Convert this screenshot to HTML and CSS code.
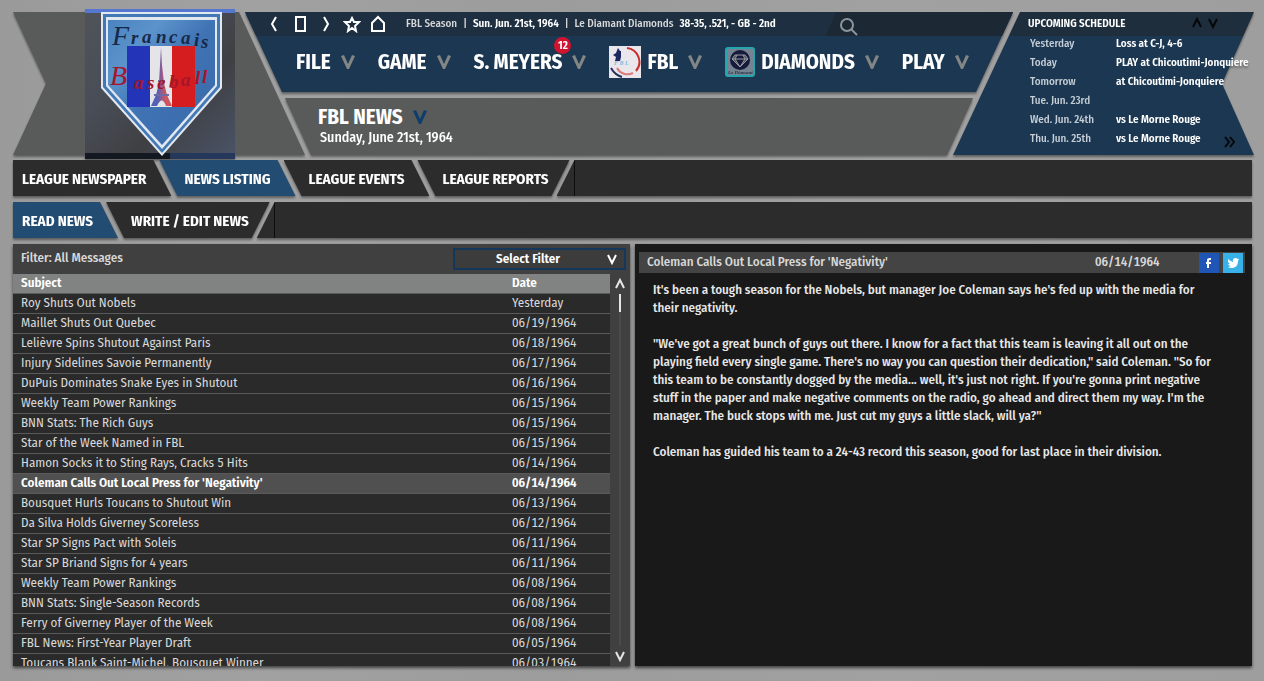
FILE: index.html
```html
<!DOCTYPE html>
<html lang="en">
<head>
  <meta charset="UTF-8" />
  <meta name="viewport" content="width=device-width, initial-scale=1" />
  <title>FBL News</title>
  <link rel="stylesheet" href="styles.css">
</head>
<body>
  <!-- shared icons -->
  <svg class="defs" width="0" height="0" aria-hidden="true">
    <symbol id="down" viewBox="0 0 14 16"><path d="M0 2l3-1 4 9 4-9 3 1-6 13H6z" /></symbol>
    <symbol id="caret" viewBox="0 0 10 12"><path d="M1 2l4 8 4-8" fill="none" stroke="currentColor" stroke-width="2" /></symbol>
  </svg>

  <header class="header">
    <div class="brand">
      <svg class="brand-logo" viewBox="0 0 150 150" role="img" aria-label="Francais Baseball">
        <defs>
          <linearGradient id="sky" x1="0" y1="0" x2="1" y2="1">
            <stop offset="0" stop-color="#505359" />
            <stop offset=".35" stop-color="#484d57" />
            <stop offset=".65" stop-color="#3f4043" />
            <stop offset="1" stop-color="#4a5468" />
          </linearGradient>
          <linearGradient id="plate" x1="0" y1="0" x2="1" y2="1">
            <stop offset="0" stop-color="#4a83c0" />
            <stop offset=".25" stop-color="#5c93cb" />
            <stop offset=".5" stop-color="#3f73b4" />
            <stop offset="1" stop-color="#3a69a8" />
          </linearGradient>
          <linearGradient id="tower" gradientUnits="userSpaceOnUse" x1="66" y1="0" x2="87" y2="0">
            <stop offset=".3" stop-color="#5261b8" />
            <stop offset=".7" stop-color="#d0555f" />
          </linearGradient>
        </defs>
        <rect width="150" height="150" fill="url(#sky)" />
        <rect width="150" height="4" fill="#5577cf" />
        <rect y="144" width="150" height="6" fill="#141921" />
        <rect x="85" y="144" width="65" height="6" fill="#26375c" />
        <path d="M16 3h121v76L77 147 16 79z" fill="#e1e8ef" />
        <path d="M18 5h117v73L77 144 18 78z" fill="#4378b6" />
        <path d="M21 8h111v69L77 140 21 77z" fill="#e1e8ef" />
        <path d="M23 11h107v65L77 136 23 76z" fill="url(#plate)" />
        <rect x="42" y="37" width="23" height="61" fill="#2334b8" />
        <rect x="65" y="37" width="22" height="61" fill="#e5e4e8" />
        <rect x="87" y="37" width="23" height="61" fill="#d51d20" />
        <path d="M76 38l1 18 2 18 3 12 5 11h-6q-4-11-9 0h-6l5-11 3-12 1-18z" fill="url(#tower)" />
        <path d="M69 86h15M73 72h7" stroke="#6f6aa6" stroke-width="2" />
        <text class="logo-text" y="36 35 34 34 34 35 37 39" x="27 46 57 71 84 96 109 116" fill="#17294a"><tspan class="logo-cap">F</tspan>rancais</text>
        <text class="logo-text" y="76 80 80 80 79 77 75 74" x="25 49 62 72 84 96 110 117" fill="#a5152c"><tspan class="logo-cap">B</tspan>aseball</text>
      </svg>
    </div>

    <div class="center">
      <div class="menu">
        <div class="toolbar">
          <div class="tools">
            <button type="button" aria-label="Back"><svg width="18" height="18" viewBox="0 0 18 18"><path d="M11 2L7 9l4 7" /></svg></button>
            <button type="button" aria-label="Page"><svg width="18" height="18" viewBox="0 0 18 18"><path d="M5 2h9v14H5z" /></svg></button>
            <button type="button" aria-label="Forward"><svg width="18" height="18" viewBox="0 0 18 18"><path d="M7 2l4 7-4 7" /></svg></button>
            <button type="button" aria-label="Favorites"><svg width="18" height="18" viewBox="0 0 18 18"><path d="M9 3l2 4h5l-4 4 1 5-4-3-4 3 1-5-4-4h5z" /></svg></button>
            <button type="button" aria-label="Home"><svg width="18" height="18" viewBox="0 0 18 18"><path d="M3 16V8l6-6 6 6v8z" /></svg></button>
          </div>
          <div class="status">
            <span>FBL Season</span><i>|</i><b>Sun. Jun. 21st, 1964</b><i>|</i><span>Le Diamant Diamonds</span><b>38-35, .521, - GB - 2nd</b>
          </div>
          <button type="button" class="search" aria-label="Search">
            <svg width="18" height="18" viewBox="0 0 18 18"><circle cx="7" cy="7" r="6" /><path d="M11 11l6 6" /></svg>
          </button>
        </div>
        <nav class="nav">
          <button type="button">FILE <svg class="down"><use href="#down" /></svg></button>
          <button type="button">GAME <svg class="down"><use href="#down" /></svg></button>
          <button type="button"><span class="manager">S. MEYERS<span class="badge">12</span></span> <svg class="down"><use href="#down" /></svg></button>
          <button type="button">
            <svg class="team" width="32" height="32" viewBox="0 0 32 32" aria-hidden="true">
              <rect width="32" height="32" fill="#e9e6ec" />
              <g fill="none" stroke-width="2">
                <path d="M18 2a14 14 0 0 1 9 23" stroke="#c8302e" />
                <path d="M8 22a12 12 0 0 0 16 5" stroke="#dc7c79" />
                <path d="M2 22q4 7 11 9" stroke="#20305f" />
              </g>
              <path d="M9 2l2 3h1v6l-1 4H6l1-4-3-2 3-2z" fill="#1c2862" />
              <text x="5" y="19" class="tiny" fill="#7fb9dd">F B L</text>
            </svg>
            FBL <svg class="down"><use href="#down" /></svg>
          </button>
          <button type="button">
            <svg class="team" width="30" height="30" viewBox="1 1 30 30" aria-hidden="true">
              <rect x="2" y="2" width="28" height="28" rx="2" fill="#758490" stroke="#27a5ae" stroke-width="2" />
              <circle cx="16" cy="14" r="10" fill="#171a3c" />
              <path d="M11 9h10l3 4-8 8-8-8zM8 13h16M13 9l-2 4 5 8 5-8-2-4" fill="#4b5058" stroke="#969ba1" />
              <text x="4" y="28" class="tiny small" fill="#26344d">Le Diamant</text>
            </svg>
            DIAMONDS <svg class="down"><use href="#down" /></svg>
          </button>
          <button type="button">PLAY <svg class="down"><use href="#down" /></svg></button>
        </nav>
      </div>
      <div class="heading">
        <h1>FBL NEWS <svg class="down"><use href="#down" /></svg></h1>
        <p>Sunday, June 21st, 1964</p>
      </div>
    </div>

    <section class="schedule">
      <div class="schedule-head">
        <h2>UPCOMING SCHEDULE</h2>
        <div class="schedule-arrows">
          <button type="button" aria-label="Earlier"><svg class="caret up"><use href="#caret" /></svg></button>
          <button type="button" aria-label="Later"><svg class="caret"><use href="#caret" /></svg></button>
        </div>
      </div>
      <table>
        <tr><td>Yesterday</td><td>Loss at C-J, 4-6</td></tr>
        <tr><td>Today</td><td>PLAY at Chicoutimi-Jonquiere</td></tr>
        <tr><td>Tomorrow</td><td>at Chicoutimi-Jonquiere</td></tr>
        <tr><td>Tue. Jun. 23rd</td><td></td></tr>
        <tr><td>Wed. Jun. 24th</td><td>vs Le Morne Rouge</td></tr>
        <tr><td>Thu. Jun. 25th</td><td>vs Le Morne Rouge</td></tr>
      </table>
      <button type="button" class="more" aria-label="Full schedule"><svg width="12" height="12" viewBox="0 0 12 12"><path d="M1 1l4 5-4 5M6 1l4 5-4 5" /></svg></button>
    </section>
  </header>

  <main class="page">
    <nav class="tabs">
      <a href="#newspaper">LEAGUE NEWSPAPER</a>
      <a href="#listing" class="active">NEWS LISTING</a>
      <a href="#events">LEAGUE EVENTS</a>
      <a href="#reports">LEAGUE REPORTS</a>
      <span class="filler"></span>
    </nav>
    <nav class="tabs">
      <a href="#read" class="active">READ NEWS</a>
      <a href="#write">WRITE / EDIT NEWS</a>
      <span class="filler"></span>
    </nav>

    <div class="panels">
      <section class="list">
        <div class="filter">
          <label for="filter">Filter: All Messages</label>
          <div class="select">
            <select id="filter"><option>Select Filter</option></select>
            <svg class="caret"><use href="#caret" /></svg>
          </div>
        </div>
        <div class="list-body">
          <div class="rows">
            <table>
              <thead><tr><th>Subject</th><th class="date">Date</th></tr></thead>
              <tbody>
                <tr><td>Roy Shuts Out Nobels</td><td>Yesterday</td></tr>
                <tr><td>Maillet Shuts Out Quebec</td><td>06/19/1964</td></tr>
                <tr><td>Lelièvre Spins Shutout Against Paris</td><td>06/18/1964</td></tr>
                <tr><td>Injury Sidelines Savoie Permanently</td><td>06/17/1964</td></tr>
                <tr><td>DuPuis Dominates Snake Eyes in Shutout</td><td>06/16/1964</td></tr>
                <tr><td>Weekly Team Power Rankings</td><td>06/15/1964</td></tr>
                <tr><td>BNN Stats: The Rich Guys</td><td>06/15/1964</td></tr>
                <tr><td>Star of the Week Named in FBL</td><td>06/15/1964</td></tr>
                <tr><td>Hamon Socks it to Sting Rays, Cracks 5 Hits</td><td>06/14/1964</td></tr>
                <tr class="selected"><td>Coleman Calls Out Local Press for 'Negativity'</td><td>06/14/1964</td></tr>
                <tr><td>Bousquet Hurls Toucans to Shutout Win</td><td>06/13/1964</td></tr>
                <tr><td>Da Silva Holds Giverney Scoreless</td><td>06/12/1964</td></tr>
                <tr><td>Star SP Signs Pact with Soleis</td><td>06/11/1964</td></tr>
                <tr><td>Star SP Briand Signs for 4 years</td><td>06/11/1964</td></tr>
                <tr><td>Weekly Team Power Rankings</td><td>06/08/1964</td></tr>
                <tr><td>BNN Stats: Single-Season Records</td><td>06/08/1964</td></tr>
                <tr><td>Ferry of Giverney Player of the Week</td><td>06/08/1964</td></tr>
                <tr><td>FBL News: First-Year Player Draft</td><td>06/05/1964</td></tr>
                <tr><td>Toucans Blank Saint-Michel, Bousquet Winner</td><td>06/03/1964</td></tr>
              </tbody>
            </table>
          </div>
          <div class="scrollbar">
            <button type="button" aria-label="Scroll up"><svg class="caret up"><use href="#caret" /></svg></button>
            <div class="track"><div class="thumb"></div></div>
            <button type="button" aria-label="Scroll down"><svg class="caret"><use href="#caret" /></svg></button>
          </div>
        </div>
      </section>

      <article class="story">
        <div class="story-head">
          <h2>Coleman Calls Out Local Press for 'Negativity'</h2>
          <time datetime="1964-06-14">06/14/1964</time>
          <a href="#facebook" class="share facebook" aria-label="Share on Facebook"><svg width="20" height="20" viewBox="0 0 20 20"><path d="M8 15v-4H7V9h1V7q0-2 3-2h1v2h-1q-1 0-1 1v1h2v2h-2v4z" /></svg></a>
          <a href="#twitter" class="share twitter" aria-label="Share on Twitter"><svg width="20" height="20" viewBox="0 0 20 20"><path d="M5 6q2 2 5 3-1-4 3-4l2 1 1 0-1 2c0 5-3 7-6 7q-3 0-4-1l3-1q-2 0-3-2h2q-2-1-2-3z" /></svg></a>
        </div>
        <div class="story-text">
          <p>It's been a tough season for the Nobels, but manager Joe Coleman says he's fed up with the media for their negativity.</p>
          <p>"We've got a great bunch of guys out there. I know for a fact that this team is leaving it all out on the playing field every single game. There's no way you can question their dedication," said Coleman. "So for this team to be constantly dogged by the media... well, it's just not right. If you're gonna print negative stuff in the paper and make negative comments on the radio, go ahead and direct them my way. I'm the manager. The buck stops with me. Just cut my guys a little slack, will ya?"</p>
          <p>Coleman has guided his team to a 24-43 record this season, good for last place in their division.</p>
        </div>
      </article>
    </div>
  </main>
</body>
</html>
```
FILE: styles.css
```css
* {
  box-sizing: border-box;
}
body {
  margin: 0;
  height: 100vh;
  display: flex;
  flex-direction: column;
  overflow: hidden;
  background: linear-gradient(90deg, #9a9a9a, #a1a1a1 20%, #9c9c9c 45%, #a1a1a1 70%, #9e9e9e);
  color: #d8d8d8;
  font-family: "Fira Sans Condensed", Lato, sans-serif;
  font-size: 13px;
}
h1, h2, p {
  margin: 0;
}
button {
  padding: 0;
  border: none;
  background: none;
  color: inherit;
  font: inherit;
  cursor: pointer;
}
a {
  color: inherit;
  text-decoration: none;
}
svg {
  display: block;
  flex: none;
}
table {
  border-collapse: collapse;
}
.defs {
  position: absolute;
}
.down {
  width: 14px;
  height: 16px;
  fill: #838685;
}
.caret {
  width: 10px;
  height: 12px;
}
.up {
  transform: rotate(180deg);
}

/* header */
.header {
  display: flex;
  height: 143px;
  margin: 12px 10px 5px 13px;
  filter: drop-shadow(0 2px 1px rgba(0, 0, 0, 0.4));
}
.brand {
  position: relative;
  flex: none;
  width: 292px;
}
.brand::before {
  content: "";
  display: block;
  height: 100%;
  background: #595b5a;
  clip-path: polygon(0 0, 226px 0, 100% 100%, 0 100%, 33px 50%);
}
.brand-logo {
  position: absolute;
  left: 72px;
  top: -3px;
  width: 150px;
  height: 150px;
}
.logo-text {
  font: italic bold 19px "Liberation Serif", serif;
}
.logo-cap {
  font-size: 28px;
  font-weight: normal;
}
.tiny {
  font: italic bold 6px "Liberation Serif", serif;
}
.small {
  font-size: 5px;
}
.center {
  flex: 1;
  display: flex;
  flex-direction: column;
  gap: 6px;
  margin-left: -60px;
}
.menu {
  height: 80px;
  background: #1c3751;
  clip-path: polygon(0 0, 100% 0, calc(100% - 37px) 100%, 37px 100%);
}
.toolbar {
  display: flex;
  align-items: center;
  height: 24px;
  padding-left: 20px;
  background: #1d2f41;
}
.tools {
  display: flex;
  gap: 8px;
  width: 141px;
}
.tools svg {
  fill: none;
  stroke: #fff;
  stroke-width: 2;
}
.status {
  display: flex;
  flex: 1;
  gap: 6px;
  font-size: 11px;
  font-weight: 500;
  line-height: 22px;
  white-space: nowrap;
}
.status i {
  font-style: normal;
}
.status b {
  color: #fff;
  font-weight: 600;
}
.search {
  width: 187px;
  height: 24px;
  padding: 6px 0 0 14px;
  background: #1c2833;
  clip-path: polygon(10px 0, 100% 0, 100% 100%, 0 100%);
}
.search svg {
  fill: none;
  stroke: #8d959c;
  stroke-width: 2;
}
.nav {
  display: flex;
  gap: 23px;
  height: 52px;
  padding-left: 51px;
}
.nav button {
  display: flex;
  align-items: center;
  gap: 10px;
  color: #fff;
  font-size: 21px;
  font-weight: bold;
}
.team {
  margin-right: -4px;
}
.manager {
  position: relative;
}
.badge {
  position: absolute;
  right: -9px;
  top: -12px;
  width: 17px;
  height: 17px;
  border-radius: 50%;
  background: #cf1430;
  font-size: 11px;
  line-height: 17px;
}
.heading {
  flex: 1;
  padding: 8px 0 0 73px;
  background: #595b5a;
  color: #fff;
  clip-path: polygon(40px 0, calc(100% - 40px) 0, calc(100% - 66px) 100%, 66px 100%);
}
.heading h1 {
  display: flex;
  align-items: center;
  gap: 10px;
  font-size: 21px;
  font-weight: bold;
  line-height: 22px;
}
.heading .down {
  fill: #0e3d6d;
}
.heading p {
  padding-left: 2px;
  font-size: 14px;
  font-weight: 500;
  line-height: 20px;
}
.schedule {
  position: relative;
  z-index: 0;
  flex: none;
  width: 301px;
  margin-left: -60px;
  color: #fff;
  font-size: 11px;
}
.schedule::before {
  content: "";
  position: absolute;
  inset: 0;
  z-index: -1;
  background: linear-gradient(#1f2e3d 24px, #1c3751 24px);
  clip-path: polygon(67px 0, 100% 0, calc(100% - 32px) 50%, 100% 100%, 0 100%);
}
.schedule-head {
  display: flex;
  justify-content: space-between;
  align-items: center;
  height: 22px;
  padding: 0 36px 0 75px;
}
.schedule h2 {
  font-size: 11px;
  font-weight: 600;
}
.schedule-arrows {
  display: flex;
  gap: 6px;
  color: #050709;
}
.schedule table {
  margin-left: 77px;
}
.schedule td {
  height: 19px;
  padding: 0;
  white-space: nowrap;
  font-weight: 600;
}
.schedule td:first-child {
  width: 86px;
  color: #c5ced6;
  font-weight: 500;
}
.more {
  position: absolute;
  right: 18px;
  bottom: 7px;
}
.more svg {
  fill: none;
  stroke: #050709;
  stroke-width: 2;
}

/* tabs */
.page {
  flex: 1;
  min-height: 0;
  display: flex;
  flex-direction: column;
  gap: 6px;
  padding: 0 12px 15px 13px;
}
.tabs {
  display: flex;
  height: 36px;
  filter: drop-shadow(0 2px 1px rgba(0, 0, 0, 0.4));
}
.tabs a {
  padding: 0 25px;
  margin-left: -12px;
  background: #2c2c2c;
  color: #fff;
  font-size: 15px;
  font-weight: bold;
  line-height: 38px;
  clip-path: polygon(0 0, calc(100% - 18px) 0, 100% 100%, 18px 100%);
}
.tabs a:first-child {
  margin-left: 0;
  padding-left: 9px;
  clip-path: polygon(0 0, calc(100% - 18px) 0, 100% 100%, 0 100%);
}
.tabs a:nth-last-child(2) {
  padding-right: 21px;
  clip-path: polygon(0 0, 100% 0, calc(100% - 18px) 100%, 18px 100%);
}
.tabs .active {
  background: #234c72;
}
.filler {
  flex: 1;
  margin-left: -13px;
  background: linear-gradient(90deg, #2c2c2c 17px, #0c0c0c 17px, #0c0c0c 18px, #2c2c2c 18px);
  clip-path: polygon(18px 0, 100% 0, 100% 100%, 0 100%);
}

/* news */
.panels {
  flex: 1;
  min-height: 0;
  display: grid;
  grid-template-columns: 1fr 1fr;
  gap: 5px;
}
.list, .story {
  min-height: 0;
  box-shadow: 0 2px 3px rgba(0, 0, 0, 0.6);
}
.list {
  display: flex;
  flex-direction: column;
  background: #404040;
}
.filter {
  display: flex;
  justify-content: space-between;
  align-items: center;
  height: 30px;
  padding: 0 4px 0 8px;
  font-weight: 500;
}
.filter label {
  line-height: 28px;
  height: 30px;
}
.select {
  position: relative;
  color: #fff;
}
.select select {
  width: 173px;
  height: 22px;
  padding: 0 23px 2px 0;
  border: 2px solid #14375c;
  appearance: none;
  background: #3c3c3c;
  color: inherit;
  font: inherit;
  font-weight: 600;
  text-align-last: center;
}
.select .caret {
  position: absolute;
  right: 9px;
  top: 5px;
}
.list-body {
  flex: 1;
  min-height: 0;
  display: flex;
}
.rows {
  flex: 1;
  overflow: hidden;
}
.rows table {
  width: 100%;
  border-collapse: separate;
  border-spacing: 0;
}
.rows th, .rows td {
  height: 20px;
  padding: 0 0 2px 8px;
  line-height: 17px;
  text-align: left;
}
.rows td {
  background: #2a2a2a;
  border-bottom: 1px solid #5a5a5a;
  font-variant-numeric: tabular-nums;
}
.rows th {
  background: #818382;
  border-bottom: 1px solid #5a5a5a;
  color: #fff;
  font-weight: 600;
}
.rows .date {
  width: 106px;
}
.rows .selected td {
  background: #505050;
  color: #fff;
  font-weight: 600;
}
.scrollbar {
  display: flex;
  flex-direction: column;
  align-items: center;
  width: 20px;
  padding: 4px 0;
  color: #e6e6e6;
}
.track {
  flex: 1;
  width: 2px;
  margin: 4px 0;
  background: #4a4a4a;
}
.thumb {
  height: 18px;
  background: #e6e6e6;
}
.story {
  padding: 8px 7px 8px 4px;
  background: #191919;
}
.story-head {
  display: flex;
  align-items: center;
  height: 21px;
  padding: 0 2px 0 8px;
  background: #444;
  line-height: 18px;
}
.story-head h2 {
  flex: 1;
  padding-bottom: 2px;
  font-size: 13px;
  font-weight: 500;
}
.story-head time {
  width: 104px;
  padding-bottom: 2px;
  font-weight: 500;
  font-variant-numeric: tabular-nums;
}
.share {
  width: 20px;
  height: 20px;
  fill: #fff;
}
.facebook {
  background: #1f56b6;
}
.twitter {
  margin-left: 4px;
  background: #38b1e9;
}
.story-text {
  padding: 8px 28px 0 14px;
  color: #e8e8e8;
  font-weight: 500;
  line-height: 18px;
}
.story-text p {
  margin-bottom: 18px;
}
```
